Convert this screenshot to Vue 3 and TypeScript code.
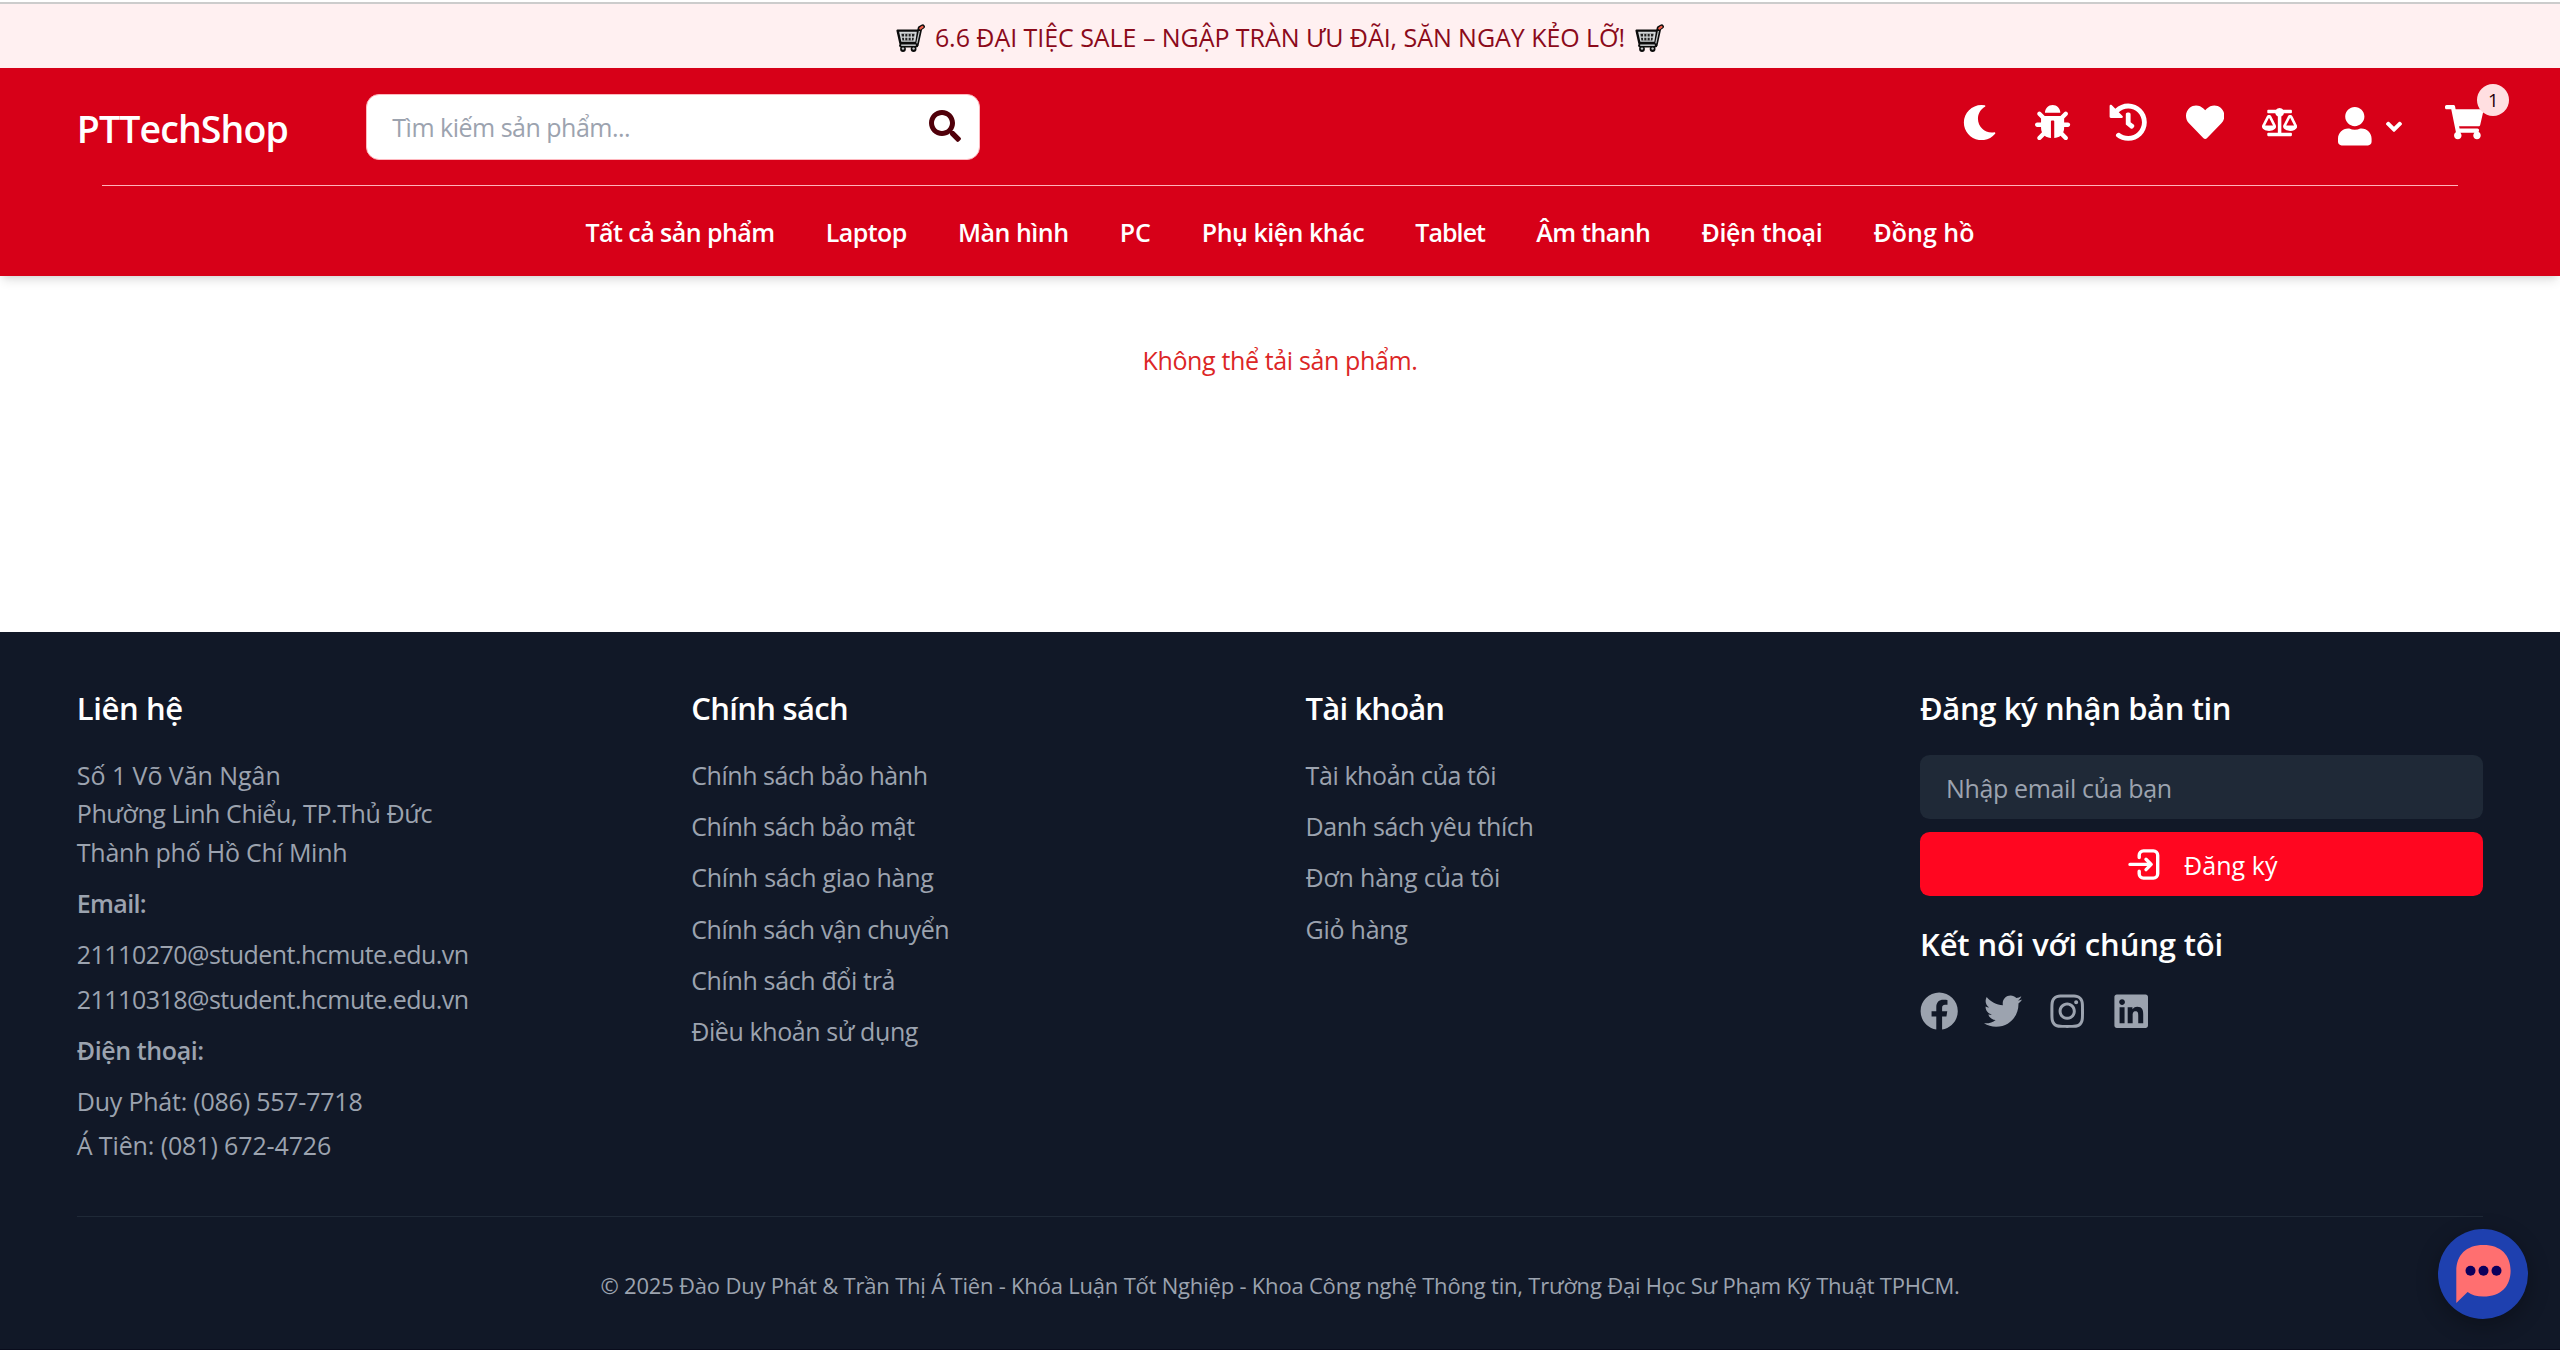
<script setup lang="ts">
interface TextItem {
  label: string
  tracking: number
}

const categories: TextItem[] = [
  { label: 'Tất cả sản phẩm', tracking: -0.55 },
  { label: 'Laptop', tracking: -0.55 },
  { label: 'Màn hình', tracking: -0.5 },
  { label: 'PC', tracking: -0.2 },
  { label: 'Phụ kiện khác', tracking: -0.5 },
  { label: 'Tablet', tracking: -0.95 },
  { label: 'Âm thanh', tracking: -0.6 },
  { label: 'Điện thoại', tracking: -0.38 },
  { label: 'Đồng hồ', tracking: 0 },
]

const policies: TextItem[] = [
  { label: 'Chính sách bảo hành', tracking: -0.44 },
  { label: 'Chính sách bảo mật', tracking: -0.4 },
  { label: 'Chính sách giao hàng', tracking: -0.26 },
  { label: 'Chính sách vận chuyển', tracking: -0.42 },
  { label: 'Chính sách đổi trả', tracking: -0.36 },
  { label: 'Điều khoản sử dụng', tracking: -0.4 },
]

const account: TextItem[] = [
  { label: 'Tài khoản của tôi', tracking: -0.42 },
  { label: 'Danh sách yêu thích', tracking: -0.38 },
  { label: 'Đơn hàng của tôi', tracking: -0.2 },
  { label: 'Giỏ hàng', tracking: -0.26 },
]

const address: TextItem[] = [
  { label: 'Số 1 Võ Văn Ngân', tracking: -0.05 },
  { label: 'Phường Linh Chiểu, TP.Thủ Đức', tracking: -0.4 },
  { label: 'Thành phố Hồ Chí Minh', tracking: -0.24 },
]

const actions = [
  {
    name: 'moon',
    viewBox: '0 0 512 512',
    d: 'M283.211 512c78.962 0 151.079-35.925 198.857-94.792 7.068-8.708-.639-21.43-11.562-19.35-124.203 23.654-238.262-71.576-238.262-196.954 0-72.222 38.662-138.635 101.498-174.394 9.686-5.512 7.25-20.197-3.756-22.23A258.156 258.156 0 0 0 283.211 0c-141.309 0-256 114.511-256 256 0 141.309 114.511 256 256 256z',
  },
  {
    name: 'bug',
    viewBox: '0 0 512 512',
    d: 'M511.988 288.9c-.478 17.43-15.217 31.1-32.653 31.1H424v16c0 21.864-4.882 42.584-13.6 61.145l60.228 60.228c12.496 12.497 12.496 32.758 0 45.255-12.498 12.497-32.759 12.496-45.256 0l-54.736-54.736C345.886 467.965 314.351 480 280 480V236c0-6.627-5.373-12-12-12h-24c-6.627 0-12 5.373-12 12v244c-34.351 0-65.886-12.035-90.636-32.108l-54.736 54.736c-12.498 12.497-32.759 12.496-45.256 0-12.496-12.497-12.496-32.758 0-45.255l60.228-60.228C92.882 378.584 88 357.864 88 336v-16H32.666C15.23 320 .491 306.33.013 288.9-.484 270.816 14.028 256 32 256h56v-58.745l-46.628-46.628c-12.496-12.497-12.496-32.758 0-45.255 12.498-12.497 32.758-12.497 45.256 0L141.255 160h229.489l54.627-54.627c12.498-12.497 32.758-12.497 45.256 0 12.496 12.497 12.496 32.758 0 45.255L424 197.255V256h56c17.972 0 32.484 14.816 31.988 32.9zM257 0c-61.856 0-112 50.144-112 112h224C369 50.144 318.856 0 257 0z',
  },
  {
    name: 'history',
    viewBox: '0 0 512 512',
    d: 'M504 255.531c.253 136.64-111.18 248.372-247.82 248.468-59.015.042-113.223-20.53-155.822-54.911-11.077-8.94-11.905-25.541-1.839-35.607l11.267-11.267c8.609-8.609 22.353-9.551 31.891-1.984C173.062 425.135 212.781 440 256 440c101.705 0 184-82.311 184-184 0-101.705-82.311-184-184-184-48.814 0-93.149 18.969-126.068 49.932l50.754 50.754c10.08 10.08 2.941 27.314-11.313 27.314H24c-8.837 0-16-7.163-16-16V38.627c0-14.254 17.234-21.393 27.314-11.314l49.372 49.372C129.209 34.136 189.552 8 256 8c136.81 0 247.747 110.78 248 247.531zm-180.912 78.784l9.823-12.63c8.138-10.463 6.253-25.542-4.21-33.679L288 256.349V152c0-13.255-10.745-24-24-24h-16c-13.255 0-24 10.745-24 24v135.651l65.409 50.874c10.463 8.137 25.541 6.253 33.679-4.21z',
  },
  {
    name: 'heart',
    viewBox: '0 0 512 512',
    d: 'M462.3 62.6C407.5 15.9 326 24.3 275.7 76.2L256 96.5l-19.7-20.3C186.1 24.3 104.5 15.9 49.7 62.6c-62.8 53.6-66.1 149.8-9.9 207.9l193.5 199.8c12.5 12.9 32.8 12.9 45.3 0l193.5-199.8c56.3-58.1 53-154.3-9.8-207.9z',
  },
  {
    name: 'scale',
    viewBox: '0 0 640 512',
    d: 'M256 336h-.02c0-16.18 1.34-8.73-85.05-181.51-17.65-35.29-68.19-35.36-85.87 0C-2.06 328.75.02 320.33.02 336H0c0 44.18 57.31 80 128 80s128-35.82 128-80zM128 176l72 144H56l72-144zm511.98 160c0-16.18 1.34-8.73-85.05-181.51-17.65-35.29-68.19-35.36-85.87 0-87.12 174.26-85.04 165.84-85.04 181.51H384c0 44.18 57.31 80 128 80s128-35.82 128-80h-.02zM440 320l72-144 72 144H440zm88 128H352V153.25c23.51-10.29 41.16-31.48 46.39-57.25H528c8.84 0 16-7.16 16-16V48c0-8.84-7.16-16-16-16H383.64C369.04 12.68 346.09 0 320 0s-49.04 12.68-63.64 32H112c-8.84 0-16 7.16-16 16v32c0 8.84 7.16 16 16 16h129.61c5.23 25.76 22.87 46.96 46.39 57.25V448H112c-8.84 0-16 7.16-16 16v32c0 8.84 7.16 16 16 16h416c8.84 0 16-7.16 16-16v-32c0-8.84-7.16-16-16-16z',
  },
]

const socials = [
  {
    name: 'Facebook',
    viewBox: '0 0 512 512',
    d: 'M504 256C504 119 393 8 256 8S8 119 8 256c0 123.78 90.69 226.38 209.25 245V327.69h-63V256h63v-54.64c0-62.15 37-96.48 93.67-96.48 27.14 0 55.52 4.84 55.52 4.84v61h-31.28c-30.8 0-40.41 19.12-40.41 38.73V256h68.78l-11 71.69h-57.78V501C413.31 482.38 504 379.78 504 256z',
  },
  {
    name: 'Twitter',
    viewBox: '0 0 512 512',
    d: 'M459.37 151.716c.325 4.548.325 9.097.325 13.645 0 138.72-105.583 298.558-298.558 298.558-59.452 0-114.68-17.219-161.137-47.106 8.447.974 16.568 1.299 25.34 1.299 49.055 0 94.213-16.568 130.274-44.832-46.132-.975-84.792-31.188-98.112-72.772 6.498.974 12.995 1.624 19.818 1.624 9.421 0 18.843-1.3 27.614-3.573-48.081-9.747-84.143-51.98-84.143-102.985v-1.299c13.969 7.797 30.214 12.67 47.431 13.319-28.264-18.843-46.781-51.005-46.781-87.391 0-19.492 5.197-37.36 14.294-52.954 51.655 63.675 129.3 105.258 216.365 109.807-1.624-7.797-2.599-15.918-2.599-24.04 0-57.828 46.782-104.934 104.934-104.934 30.213 0 57.502 12.67 76.67 33.137 23.715-4.548 46.456-13.32 66.599-25.34-7.798 24.366-24.366 44.833-46.132 57.827 21.117-2.273 41.584-8.122 60.426-16.243-14.292 20.791-32.161 39.308-52.628 54.253z',
  },
  {
    name: 'Instagram',
    viewBox: '0 0 448 512',
    d: 'M224.1 141c-63.6 0-114.9 51.3-114.9 114.9s51.3 114.9 114.9 114.9S339 319.5 339 255.9 287.7 141 224.1 141zm0 189.6c-41.1 0-74.7-33.5-74.7-74.7s33.5-74.7 74.7-74.7 74.7 33.5 74.7 74.7-33.6 74.7-74.7 74.7zm146.4-194.3c0 14.9-12 26.8-26.8 26.8-14.9 0-26.8-12-26.8-26.8s12-26.8 26.8-26.8 26.8 12 26.8 26.8zm76.1 27.2c-1.7-35.9-9.9-67.7-36.2-93.9-26.2-26.2-58-34.4-93.9-36.2-37-2.1-147.9-2.1-184.9 0-35.8 1.7-67.6 9.9-93.9 36.1s-34.4 58-36.2 93.9c-2.1 37-2.1 147.9 0 184.9 1.7 35.9 9.9 67.7 36.2 93.9s58 34.4 93.9 36.2c37 2.1 147.9 2.1 184.9 0 35.9-1.7 67.7-9.9 93.9-36.2 26.2-26.2 34.4-58 36.2-93.9 2.1-37 2.1-147.8 0-184.8zM398.8 388c-7.8 19.6-22.9 34.7-42.6 42.6-29.5 11.7-99.5 9-132.1 9s-102.7 2.6-132.1-9c-19.6-7.8-34.7-22.9-42.6-42.6-11.7-29.5-9-99.5-9-132.1s-2.6-102.7 9-132.1c7.8-19.6 22.9-34.7 42.6-42.6 29.5-11.7 99.5-9 132.1-9s102.7-2.6 132.1 9c19.6 7.8 34.7 22.9 42.6 42.6 11.7 29.5 9 99.5 9 132.1s2.7 102.7-9 132.1z',
  },
  {
    name: 'LinkedIn',
    viewBox: '0 0 448 512',
    d: 'M416 32H31.9C14.3 32 0 46.5 0 64.3v383.4C0 465.5 14.3 480 31.9 480H416c17.6 0 32-14.5 32-32.3V64.3c0-17.8-14.4-32.3-32-32.3zM135.4 416H69V202.2h66.5V416zm-33.2-243c-21.3 0-38.5-17.3-38.5-38.5S80.9 96 102.2 96c21.2 0 38.5 17.3 38.5 38.5 0 21.3-17.2 38.5-38.5 38.5zm282.1 243h-66.4V312c0-24.8-.5-56.7-34.5-56.7-34.6 0-39.9 27-39.9 54.9V416h-66.4V202.2h63.7v29.2h.9c8.9-16.8 30.6-34.5 62.9-34.5 67.2 0 79.7 44.3 79.7 101.9V416z',
  },
]

const spaced = (value: number) => ({ letterSpacing: `${value}px` })
</script>

<template>
  <div class="page">
    <svg class="symbols" width="0" height="0" aria-hidden="true">
      <symbol id="trolley" viewBox="0 0 29 28">
        <path d="M20.400 20.500L24 4.200l2.600-1.600" fill="none" stroke="#0c0c0c" stroke-width="4.600" stroke-linecap="round" stroke-linejoin="round" />
        <path d="M1.600 6.600h20.600l-1.800 12.400H4.400z" fill="#d2d6d8" stroke="#0c0c0c" stroke-width="2.400" stroke-linejoin="round" />
        <path d="M5.400 9.800h13.200l-1.200 6.600H6.400z" fill="#222" />
        <path d="M8.700 9.800v6.600M12 9.800v6.600M15.300 9.800v6.600M5.600 13.100h12.600" stroke="#d2d6d8" stroke-width="1.200" />
        <path d="M5.200 21.400h15" stroke="#0c0c0c" stroke-width="4.200" stroke-linecap="round" />
        <path d="M5.200 21.200h14.600" stroke="#c4c8ca" stroke-width="1.500" />
        <circle cx="7" cy="25" r="2.900" fill="#0c0c0c" />
        <circle cx="17.600" cy="25" r="2.900" fill="#0c0c0c" />
        <circle cx="7" cy="24.600" r="1.200" fill="#c4c8ca" />
        <circle cx="17.600" cy="24.600" r="1.200" fill="#c4c8ca" />
        <path d="M20.800 19.400L23.400 7" stroke="#c4c8ca" stroke-width="1.200" />
        <path d="M24.400 4.400l2-1.500" fill="none" stroke="#f0604c" stroke-width="2.400" stroke-linecap="round" />
      </symbol>
    </svg>

    <div class="banner">
      <svg class="trolley"><use href="#trolley" /></svg>
      <span>6.6 ĐẠI TIỆC SALE – NGẬP TRÀN ƯU ĐÃI, SĂN NGAY KẺO LỠ!</span>
      <svg class="trolley"><use href="#trolley" /></svg>
    </div>

    <header class="header">
      <div class="top-row">
        <a class="brand">PTTechShop</a>
        <div class="search">
          <span class="search-hint">Tìm kiếm sản phẩm...</span>
          <svg class="search-icon" viewBox="0 0 512 512">
            <path d="M505 442.7L405.3 343c-4.5-4.5-10.6-7-17-7H372c27.6-35.3 44-79.7 44-128C416 93.1 322.9 0 208 0S0 93.1 0 208s93.1 208 208 208c48.3 0 92.7-16.4 128-44v16.3c0 6.4 2.5 12.5 7 17l99.7 99.7c9.4 9.4 24.6 9.4 33.9 0l28.3-28.3c9.4-9.4 9.4-24.6.1-34zM208 336c-70.7 0-128-57.2-128-128 0-70.7 57.2-128 128-128 70.7 0 128 57.2 128 128 0 70.7-57.2 128-128 128z" />
          </svg>
        </div>
        <div class="actions">
          <svg v-for="icon in actions" :key="icon.name" :class="icon.name" :viewBox="icon.viewBox">
            <path :d="icon.d" />
          </svg>
          <div class="profile">
            <svg class="user" viewBox="0 0 448 512">
              <path d="M224 256c70.7 0 128-57.3 128-128S294.7 0 224 0 96 57.3 96 128s57.3 128 128 128zm89.6 32h-16.7c-22.2 10.2-46.9 16-72.9 16s-50.6-5.8-72.9-16h-16.7C60.2 288 0 348.2 0 422.4V464c0 26.5 21.5 48 48 48h352c26.5 0 48-21.5 48-48v-41.6c0-74.2-60.2-134.4-134.4-134.4z" />
            </svg>
            <svg class="angle" viewBox="0 0 320 512">
              <path d="M143 352.3L7 216.3c-9.4-9.4-9.4-24.6 0-33.9l22.6-22.6c9.4-9.4 24.6-9.4 33.9 0l96.4 96.4 96.4-96.4c9.4-9.4 24.6-9.4 33.9 0l22.6 22.6c9.4 9.4 9.4 24.6 0 33.9l-136 136c-9.2 9.4-24.4 9.4-33.8 0z" />
            </svg>
          </div>
          <div class="cart">
            <svg viewBox="0 0 576 512">
              <path d="M528.12 301.319l47.273-208C578.806 78.301 567.391 64 551.99 64H159.208l-9.166-44.81C147.758 8.021 137.93 0 126.529 0H24C10.745 0 0 10.745 0 24v16c0 13.255 10.745 24 24 24h69.883l70.248 343.435C147.325 417.1 136 435.222 136 456c0 30.928 25.072 56 56 56s56-25.072 56-56c0-15.674-6.447-29.835-16.824-40h209.647C430.447 426.165 424 440.326 424 456c0 30.928 25.072 56 56 56s56-25.072 56-56c0-22.172-12.888-41.332-31.579-50.405l5.517-24.276c3.413-15.018-8.002-29.319-23.403-29.319H218.117l-6.545-32h293.145c11.206 0 20.92-7.754 23.403-18.681z" />
            </svg>
            <span class="badge">1</span>
          </div>
        </div>
      </div>
      <nav class="nav">
        <a v-for="item in categories" :key="item.label" :style="spaced(item.tracking)">{{ item.label }}</a>
      </nav>
    </header>

    <main class="main">
      <p class="error">Không thể tải sản phẩm.</p>
    </main>

    <footer class="footer">
      <div class="columns">
        <section>
          <h3 class="lead">Liên hệ</h3>
          <div class="body">
            <p v-for="line in address" :key="line.label" :style="spaced(line.tracking)">{{ line.label }}</p>
            <p class="label">Email:</p>
            <p class="first mail">21110270@student.hcmute.edu.vn</p>
            <p class="next mail">21110318@student.hcmute.edu.vn</p>
            <p class="label phone">Điện thoại:</p>
            <p class="first">Duy Phát: (086) 557-7718</p>
            <p class="next">Á Tiên: (081) 672-4726</p>
          </div>
        </section>
        <section>
          <h3 class="tight">Chính sách</h3>
          <ul class="body links">
            <li v-for="link in policies" :key="link.label" :style="spaced(link.tracking)">{{ link.label }}</li>
          </ul>
        </section>
        <section>
          <h3 class="tighter">Tài khoản</h3>
          <ul class="body links">
            <li v-for="link in account" :key="link.label" :style="spaced(link.tracking)">{{ link.label }}</li>
          </ul>
        </section>
        <section>
          <h3 class="lead">Đăng ký nhận bản tin</h3>
          <div class="email">Nhập email của bạn</div>
          <button class="subscribe" type="button">
            <svg viewBox="0 0 32 31">
              <path d="M11.2 8.6V6.2a4.3 4.3 0 0 1 4.3-4.3h9.9a4.3 4.3 0 0 1 4.3 4.3v18.6a4.3 4.3 0 0 1-4.3 4.3h-9.9a4.3 4.3 0 0 1-4.3-4.3v-2.6M2 15.4h20.6M18 10.2l5.2 5.2-5.2 5.2" />
            </svg>
            <span>Đăng ký</span>
          </button>
          <h3 class="connect">Kết nối với chúng tôi</h3>
          <div class="socials">
            <svg v-for="icon in socials" :key="icon.name" :viewBox="icon.viewBox">
              <path :d="icon.d" />
            </svg>
          </div>
        </section>
      </div>
      <p class="copyright">
        © 2025 Đào Duy Phát &amp; Trần Thị Á Tiên - Khóa Luận Tốt Nghiệp - Khoa Công nghệ Thông tin, Trường Đại Học Sư Phạm Kỹ Thuật TPHCM.
      </p>
    </footer>

    <div class="chat">
      <svg viewBox="0 0 55 59">
        <path d="M27.4 0C45 0 54.6 10.4 54.6 25.8S45 51.6 27.4 51.6C21 51.6 15.6 50 11.6 47L.3 58V25.8C.3 10.4 10 0 27.4 0z" fill="#ff6f70" />
        <circle cx="14.5" cy="25.7" r="5" fill="#0c005c" />
        <circle cx="27.5" cy="25.7" r="5" fill="#0c005c" />
        <circle cx="40.5" cy="25.7" r="5" fill="#0c005c" />
      </svg>
    </div>
  </div>
</template>

<style>
body {
  margin: 0;
  overflow: hidden;
}
</style>

<style scoped>
* {
  box-sizing: border-box;
}

.page {
  position: relative;
  display: flex;
  flex-direction: column;
  height: 1350px;
  padding-top: 2px;
  background: #fff;
  font-family: 'Open Sans', 'Noto Sans', sans-serif;
  font-size: 25px;
  line-height: 38.4px;
}

.symbols {
  position: absolute;
}

p,
h3,
ul {
  margin: 0;
  padding: 0;
}

.banner {
  display: flex;
  align-items: center;
  justify-content: center;
  gap: 10px;
  height: 66px;
  padding-top: 2px;
  border-top: 2px solid #ccc;
  background: #fff0f1;
  color: #8b0a1a;
  letter-spacing: -0.05px;
}

.trolley {
  width: 29px;
  height: 28px;
  margin-top: 1px;
}

.header {
  z-index: 1;
  height: 208px;
  padding-top: 26px;
  background: #d70018;
  box-shadow:
    0 6.4px 9.6px -1.6px rgba(0, 0, 0, 0.1),
    0 3.2px 6.4px -3.2px rgba(0, 0, 0, 0.1);
  color: #fff;
}

.top-row {
  display: flex;
  align-items: center;
  height: 66px;
  padding: 0 76.8px;
}

.brand {
  width: 289px;
  padding-top: 4px;
  font-size: 37.5px;
  font-weight: 600;
  letter-spacing: -0.9px;
}

.search {
  display: flex;
  align-items: center;
  justify-content: space-between;
  width: 614px;
  height: 66px;
  padding: 0 18px 0 25.5px;
  border: 1px solid #ffb8bf;
  border-radius: 13px;
  background: #fff;
}

.search-hint {
  padding-top: 1px;
  color: #9ca3af;
  letter-spacing: -0.5px;
}

.search-icon {
  width: 32px;
  height: 32px;
  margin-bottom: 2px;
  fill: #50000a;
}

.actions {
  display: flex;
  align-items: center;
  height: 66px;
  margin-left: auto;
  padding-bottom: 9px;
}

.actions svg {
  display: block;
  fill: #fff;
}

.moon,
.bug {
  width: 35.2px;
  height: 35.2px;
}

.moon,
.bug,
.history {
  margin-right: 38.4px;
}

.history,
.heart {
  width: 38.4px;
  height: 38.4px;
}

.heart {
  margin-right: 38px;
}

.scale {
  width: 35.2px;
  height: 28.2px;
  margin-right: 41px;
}

.profile {
  display: flex;
  align-items: center;
  gap: 14px;
  margin: 8px 42.8px 0 0;
}

.user {
  width: 33.6px;
  height: 38.4px;
}

.angle {
  width: 16px;
  height: 25.6px;
}

.cart {
  position: relative;
}

.cart svg {
  width: 38.4px;
  height: 34.2px;
}

.badge {
  position: absolute;
  top: -21px;
  left: 32.4px;
  width: 32px;
  height: 32px;
  border-radius: 50%;
  background: #ffdfe1;
  color: #26000a;
  font-size: 18.5px;
  line-height: 32px;
  text-align: center;
}

.nav {
  display: flex;
  justify-content: center;
  gap: 51.2px;
  margin: 25px 102px 0;
  padding-top: 27px;
  border-top: 1px solid #ffb3ba;
  font-weight: 600;
  white-space: nowrap;
}

.main {
  height: 356px;
  padding-top: 65px;
}

.error {
  color: #dc2626;
  letter-spacing: -0.36px;
  text-align: center;
}

.footer {
  height: 718px;
  padding: 53px 76.8px 0;
  border-bottom: 1px solid #090c1c;
  background: #111827;
  color: #9ca3af;
}

.columns {
  display: grid;
  grid-template-columns: repeat(4, 1fr);
  gap: 51.2px;
  height: 531px;
}

h3 {
  height: 44px;
  margin-bottom: 26px;
  padding-top: 1px;
  color: #fff;
  font-size: 31px;
  font-weight: 600;
  line-height: 44px;
}

.lead {
  letter-spacing: -0.38px;
}

.tight {
  letter-spacing: -0.68px;
}

.tighter {
  letter-spacing: -0.85px;
}

.body {
  padding-top: 1px;
}

.label {
  margin-top: 12.8px;
  font-weight: 600;
  letter-spacing: -0.65px;
}

.phone {
  letter-spacing: -0.4px;
}

.first {
  margin-top: 12.4px;
  letter-spacing: -0.22px;
}

.next {
  margin-top: 6.4px;
  letter-spacing: -0.12px;
}

.mail {
  letter-spacing: -0.52px;
}

.links {
  display: flex;
  flex-direction: column;
  gap: 12.8px;
  list-style: none;
}

.email {
  height: 64px;
  padding: 14px 26px 0;
  border-radius: 9.6px;
  background: #1f2937;
  letter-spacing: -0.36px;
}

.subscribe {
  display: flex;
  align-items: center;
  justify-content: center;
  gap: 23.5px;
  width: 100%;
  height: 64px;
  margin-top: 13px;
  padding: 0 0 0 3px;
  border: 0;
  border-radius: 9.6px;
  background: #ff0620;
  color: #fff;
  font: inherit;
  letter-spacing: 0.1px;
}

.subscribe svg {
  width: 32px;
  height: 31px;
  fill: none;
  stroke: #fff;
  stroke-width: 3.4;
  stroke-linecap: round;
  stroke-linejoin: round;
}

.subscribe span {
  padding-top: 3px;
}

.connect {
  margin: 26px 0 25.6px;
  padding-top: 0;
  letter-spacing: -0.14px;
}

.socials {
  display: flex;
  gap: 25.6px;
}

.socials svg {
  width: 38.4px;
  height: 38.4px;
  fill: #9ca3af;
}

.copyright {
  padding-top: 49px;
  border-top: 1px solid #1f2937;
  font-size: 22px;
  letter-spacing: -0.2px;
  text-align: center;
  white-space: nowrap;
}

.chat {
  position: absolute;
  z-index: 2;
  right: 32px;
  bottom: 31px;
  display: flex;
  align-items: center;
  justify-content: center;
  width: 90px;
  height: 90px;
  border-radius: 50%;
  background: #1e40af;
  box-shadow: 0 6px 22px rgba(0, 0, 0, 0.3);
}

.chat svg {
  width: 55px;
  height: 59px;
}
</style>
